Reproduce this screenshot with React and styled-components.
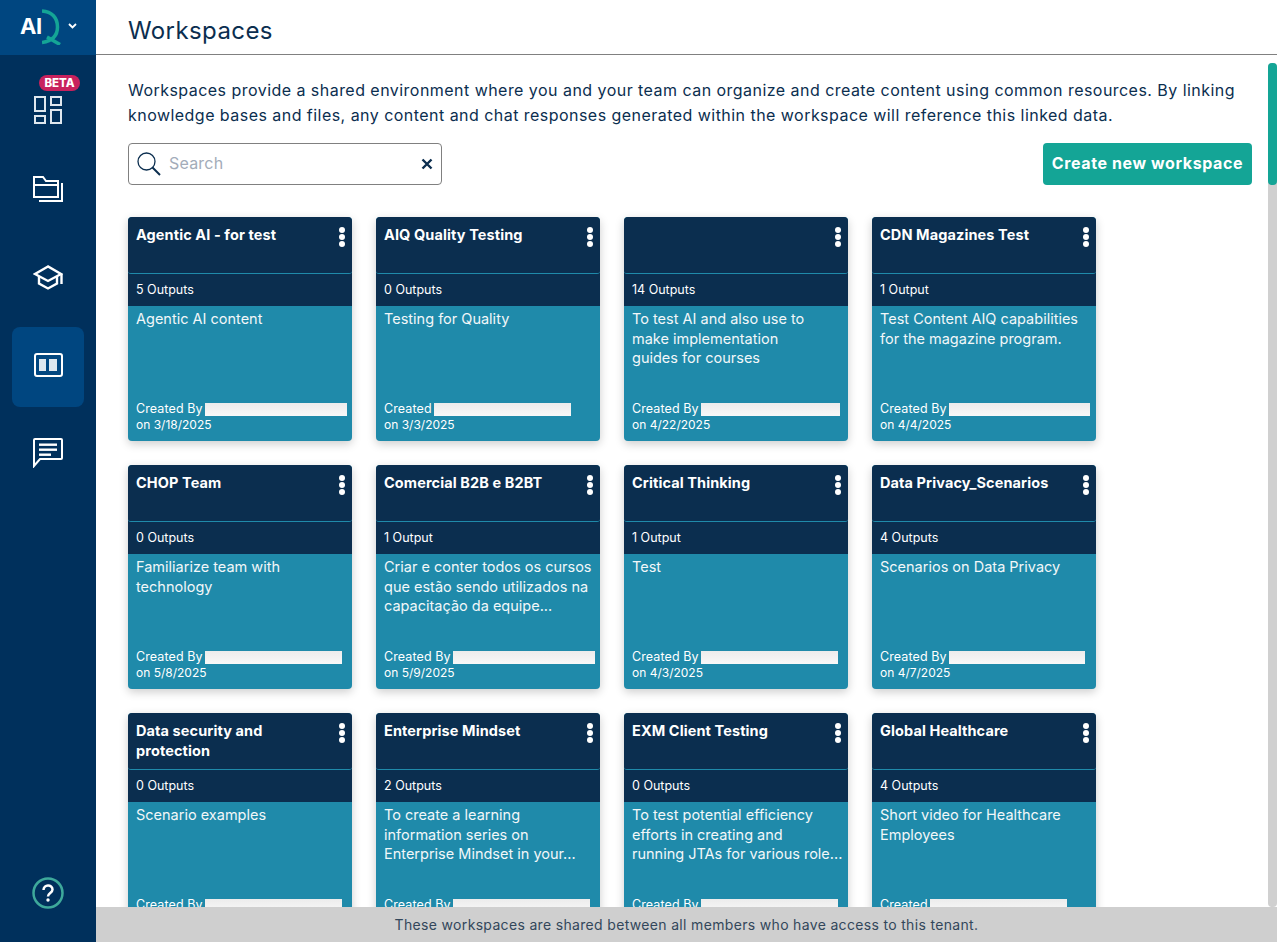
import React from 'react';
import styled, { createGlobalStyle } from 'styled-components';

const GlobalStyle = createGlobalStyle`
  html, body {
    margin: 0;
    height: 100%;
    overflow: hidden;
    background: #fff;
    font-family: Inter, "Noto Sans", sans-serif;
  }
  * { box-sizing: border-box; }
`;

const Page = styled.div`
  display: flex;
  width: 1277px;
  height: 942px;
  overflow: hidden;
`;

const Sidebar = styled.aside`
  width: 96px;
  flex: none;
  background: #00305c;
  display: flex;
  flex-direction: column;
  align-items: center;
`;

const LogoBar = styled.div`
  width: 100%;
  height: 55px;
  background: #004680;
  display: flex;
  align-items: center;
  padding: 0 0 1px 20px;
  color: #fff;
  margin-bottom: 8px;
`;

const LogoText = styled.span`
  font-size: 22px;
  font-weight: 700;
  letter-spacing: -0.5px;
  color: #fff;
  margin-bottom: 2px;
`;

const ChevronWrap = styled.span`
  display: flex;
  margin: 0 0 2px 6px;
`;

const NavItem = styled.div`
  position: relative;
  width: 72px;
  height: 80px;
  margin-bottom: 8px;
  padding-bottom: ${(p) => (p.$beta ? '0' : '4px')};
  padding-top: ${(p) => (p.$beta ? '13px' : '0')};
  border-radius: 8px;
  display: flex;
  align-items: center;
  justify-content: center;
  background: ${(p) => (p.$active ? '#004680' : 'transparent')};
`;

const Beta = styled.span`
  position: absolute;
  top: 12px;
  right: 4px;
  width: 41px;
  height: 16px;
  border-radius: 8px;
  background: #c8215d;
  color: #fff;
  font-size: 11.5px;
  line-height: 16px;
  font-weight: 800;
  text-align: center;
`;

const HelpWrap = styled.div`
  margin-top: auto;
  margin-bottom: 33px;
  display: flex;
`;

const Main = styled.main`
  flex: 1;
  min-width: 0;
  display: flex;
  flex-direction: column;
`;

const Header = styled.header`
  height: 55px;
  flex: none;
  border-bottom: 1px solid #808080;
  padding: 16px 0 0 32px;
`;

const Title = styled.h1`
  margin: 0;
  font-size: 24px;
  line-height: 30px;
  font-weight: 400;
  letter-spacing: 0.4px;
  color: #0b2e4f;
`;

const Body = styled.div`
  flex: 1;
  min-height: 0;
  display: flex;
  overflow: hidden;
`;

const Content = styled.div`
  flex: 1;
  min-width: 0;
  padding: 23px 16px 0 32px;
`;

const Intro = styled.p`
  margin: 0 0 16px;
  font-size: 16px;
  line-height: 24.500px;
  letter-spacing: 0.46px;
  color: #0b2e4f;
  white-space: nowrap;
`;

const Toolbar = styled.div`
  display: flex;
  justify-content: space-between;
  align-items: center;
  margin-bottom: 32px;
`;

const SearchBox = styled.div`
  width: 314px;
  height: 42px;
  border: 1px solid #808080;
  border-radius: 4px;
  display: flex;
  align-items: center;
  padding: 0 8px;
`;

const SearchInput = styled.input`
  flex: 1;
  min-width: 0;
  border: none;
  outline: none;
  margin: 0 0 2px 8px;
  padding: 0;
  font: 400 16px Inter, "Noto Sans", sans-serif;
  letter-spacing: 0.2px;
  color: #0b2e4f;
  &::placeholder { color: #a3acb9; opacity: 1; }
`;

const CreateButton = styled.button`
  width: 209px;
  height: 42px;
  border: none;
  border-radius: 4px;
  background: #14a596;
  color: #fff;
  font: 700 16px Inter, "Noto Sans", sans-serif;
  letter-spacing: 0.6px;
  padding: 0 0 2px;
`;

const Grid = styled.div`
  display: grid;
  grid-template-columns: repeat(4, 224px);
  gap: 24px;
`;

const Card = styled.article`
  height: 224px;
  border-radius: 4px;
  overflow: hidden;
  background: #1f8aaa;
  display: flex;
  flex-direction: column;
  box-shadow: 0 3px 10px rgba(0, 0, 0, 0.2);
`;

const CardTop = styled.div`
  height: 89px;
  flex: none;
  background: #0b2e4f;
  display: flex;
  flex-direction: column;
`;

const CardHead = styled.div`
  height: 57px;
  flex: none;
  padding: 8px 7px 0 8px;
  display: flex;
  justify-content: space-between;
  border-bottom: 1px solid #1f8aaa;
  border-radius: 0 0 3px 3px;
`;

const CardTitle = styled.h2`
  margin: 0;
  font-size: 14.5px;
  line-height: 20px;
  font-weight: 700;
  letter-spacing: 0.1px;
  color: #fff;
`;

const Dots = styled.div`
  flex: none;
  width: 6px;
  margin-top: 2px;
  display: flex;
  flex-direction: column;
  gap: 1px;
  span {
    width: 6px;
    height: 6px;
    border-radius: 50%;
    background: #fff;
  }
`;

const Outputs = styled.div`
  padding: 0 8px 2px;
  flex: 1;
  display: flex;
  align-items: center;
  font-size: 12.5px;
  color: #fff;
`;

const CardBody = styled.div`
  flex: 1;
  min-height: 0;
  padding: 3px 8px 8px;
  display: flex;
  flex-direction: column;
  justify-content: space-between;
  color: #fff;
`;

const Description = styled.p`
  margin: 0;
  font-size: 14.5px;
  line-height: 19.500px;
  color: #f2f7f9;
  white-space: nowrap;
`;

const Meta = styled.div`
  font-size: 12.5px;
  line-height: 16px;
`;

const CreatedRow = styled.div`
  display: flex;
  align-items: center;
  gap: 2px;
  letter-spacing: 0.1px;
  white-space: nowrap;
`;

const Redacted = styled.span`
  flex: none;
  height: 13px;
  width: ${(p) => p.$w}px;
  background: linear-gradient(#ececec, #f8f8f8);
`;

const DateLine = styled.div`
  font-size: 12px;
`;

const Footer = styled.div`
  height: 35px;
  flex: none;
  background: #cfcfcf;
  color: #33475b;
  font-size: 14px;
  letter-spacing: 0.33px;
  display: flex;
  align-items: center;
  justify-content: center;
`;

const ScrollTrack = styled.div`
  width: 9px;
  flex: none;
  margin-top: 8px;
  background: #d0d0d0;
  border-radius: 4px;
`;

const ScrollThumb = styled.div`
  height: 122px;
  background: #14a596;
  border-radius: 4px;
`;

const DashboardIcon = () => (
  <svg width="28" height="28" viewBox="0 0 28 28" fill="none" stroke="#dfe7ee" strokeWidth="2">
    <rect x="1" y="1" width="10" height="14" />
    <rect x="17" y="1" width="10" height="8" />
    <rect x="1" y="20" width="10" height="7" />
    <rect x="17" y="14" width="10" height="13" />
  </svg>
);

const FilesIcon = () => (
  <svg width="30" height="26" viewBox="0 0 30 26" fill="none" stroke="#fff" strokeWidth="2">
    <path d="M1 1h9l3 4h12v16H1z" />
    <path d="M1 9h24" />
    <path d="M29 7v18H6" />
  </svg>
);

const CapIcon = () => (
  <svg width="30" height="25" viewBox="0 0 30 25" fill="none" stroke="#fff" strokeWidth="2.4">
    <path d="M15 1.5L2 9l13 7 13-7z" />
    <path d="M6 11v7.5l9 5 9-5V11" />
    <path d="M28.5 9v10" />
  </svg>
);

const BoardIcon = () => (
  <svg width="29" height="24" viewBox="0 0 29 24">
    <rect x="1" y="1" width="27" height="22" rx="2" fill="none" stroke="#fff" strokeWidth="2" />
    <rect x="5" y="6" width="7" height="12" fill="#dfe7ee" />
    <rect x="15" y="6" width="8" height="12" fill="#dfe7ee" />
  </svg>
);

const ChatIcon = () => (
  <svg width="30" height="30" viewBox="0 0 30 30">
    <path d="M1 2a1 1 0 0 1 1-1h26a1 1 0 0 1 1 1v18a1 1 0 0 1-1 1H7l-6 7z" fill="none" stroke="#fff" strokeWidth="2" />
    <rect x="6" y="5.5" width="18" height="2.4" fill="#fff" />
    <rect x="6" y="10.5" width="18" height="2.4" fill="#fff" />
    <rect x="6" y="15.5" width="12" height="2.4" fill="#fff" />
  </svg>
);

const HelpIcon = () => (
  <svg width="32" height="32" viewBox="0 0 32 32">
    <circle cx="16" cy="16" r="14.5" fill="none" stroke="#3ea99b" strokeWidth="2.5" />
    <path d="M11.5 13c0-6 9-6 9-.5 0 3.5-4.500 3.500-4.500 7" fill="none" stroke="#fff" strokeWidth="2.5" />
    <circle cx="16" cy="23" r="1.7" fill="#fff" />
  </svg>
);

const LogoQ = () => (
  <svg width="20" height="36" viewBox="0 0 20 36" fill="none" stroke="#14a596">
    <path d="M0 2C10 2.500 15.500 9 15.500 18S10 32 0 33.500" strokeWidth="3.5" />
    <path d="M5 28L18 35.500" strokeWidth="3.5" />
  </svg>
);

const Chevron = () => (
  <svg width="9" height="6" viewBox="0 0 9 6" fill="none" stroke="#fff" strokeWidth="1.8">
    <path d="M1 1l3.5 3.5L8 1" />
  </svg>
);

const SearchIcon = () => (
  <svg width="24" height="24" viewBox="0 0 24 24" fill="none" stroke="#0b2e4f">
    <circle cx="9.5" cy="9.5" r="8.5" strokeWidth="1.3" />
    <path d="M15.5 15.5L23 23" strokeWidth="2" />
  </svg>
);

const CloseIcon = () => (
  <svg width="12" height="12" viewBox="0 0 12 12" stroke="#0b2e4f" strokeWidth="2.4">
    <path d="M1.5 1.5l9 9M10.5 1.5l-9 9" />
  </svg>
);

const workspaces = [
  { title: 'Agentic AI - for test', outputs: '5 Outputs', text: ['Agentic AI content'], by: 'Created By', w: 142, date: '3/18/2025' },
  { title: 'AIQ Quality Testing', outputs: '0 Outputs', text: ['Testing for Quality'], by: 'Created', w: 137, date: '3/3/2025' },
  { title: '', outputs: '14 Outputs', text: ['To test AI and also use to', 'make implementation', 'guides for courses'], by: 'Created By', w: 139, date: '4/22/2025' },
  { title: 'CDN Magazines Test', outputs: '1 Output', text: ['Test Content AIQ capabilities', 'for the magazine program.'], by: 'Created By', w: 141, date: '4/4/2025' },
  { title: 'CHOP Team', outputs: '0 Outputs', text: ['Familiarize team with', 'technology'], by: 'Created By', w: 137, date: '5/8/2025' },
  { title: 'Comercial B2B e B2BT', outputs: '1 Output', text: ['Criar e conter todos os cursos', 'que estão sendo utilizados na', 'capacitação da equipe...'], by: 'Created By', w: 142, date: '5/9/2025' },
  { title: 'Critical Thinking', outputs: '1 Output', text: ['Test'], by: 'Created By', w: 137, date: '4/3/2025' },
  { title: 'Data Privacy_Scenarios', outputs: '4 Outputs', text: ['Scenarios on Data Privacy'], by: 'Created By', w: 136, date: '4/7/2025' },
  { title: 'Data security and protection', outputs: '0 Outputs', text: ['Scenario examples'], by: 'Created By', w: 137, date: '' },
  { title: 'Enterprise Mindset', outputs: '2 Outputs', text: ['To create a learning', 'information series on', 'Enterprise Mindset in your...'], by: 'Created By', w: 137, date: '' },
  { title: 'EXM Client Testing', outputs: '0 Outputs', text: ['To test potential efficiency', 'efforts in creating and', 'running JTAs for various role...'], by: 'Created By', w: 137, date: '' },
  { title: 'Global Healthcare', outputs: '4 Outputs', text: ['Short video for Healthcare', 'Employees'], by: 'Created', w: 137, date: '' },
];

const WorkspaceCard = ({ item }) => (
  <Card>
    <CardTop>
      <CardHead>
        <CardTitle>{item.title}</CardTitle>
        <Dots>
          <span />
          <span />
          <span />
        </Dots>
      </CardHead>
      <Outputs>{item.outputs}</Outputs>
    </CardTop>
    <CardBody>
      <Description>
        {item.text.map((line) => (
          <React.Fragment key={line}>
            {line}
            <br />
          </React.Fragment>
        ))}
      </Description>
      <Meta>
        <CreatedRow>
          {item.by}
          <Redacted $w={item.w} />
        </CreatedRow>
        <DateLine>on {item.date}</DateLine>
      </Meta>
    </CardBody>
  </Card>
);

const App = () => {
  return (
    <Page>
      <GlobalStyle />
      <Sidebar>
        <LogoBar>
          <LogoText>AI</LogoText>
          <LogoQ />
          <ChevronWrap><Chevron /></ChevronWrap>
        </LogoBar>
        <NavItem $beta>
          <Beta>BETA</Beta>
          <DashboardIcon />
        </NavItem>
        <NavItem><FilesIcon /></NavItem>
        <NavItem><CapIcon /></NavItem>
        <NavItem $active><BoardIcon /></NavItem>
        <NavItem><ChatIcon /></NavItem>
        <HelpWrap><HelpIcon /></HelpWrap>
      </Sidebar>
      <Main>
        <Header>
          <Title>Workspaces</Title>
        </Header>
        <Body>
          <Content>
            <Intro>
              Workspaces provide a shared environment where you and your team can organize and create content using common resources. By linking
              <br />
              knowledge bases and files, any content and chat responses generated within the workspace will reference this linked data.
            </Intro>
            <Toolbar>
              <SearchBox>
                <SearchIcon />
                <SearchInput placeholder="Search" />
                <CloseIcon />
              </SearchBox>
              <CreateButton>Create new workspace</CreateButton>
            </Toolbar>
            <Grid>
              {workspaces.map((item) => (
                <WorkspaceCard key={item.title + item.outputs} item={item} />
              ))}
            </Grid>
          </Content>
          <ScrollTrack>
            <ScrollThumb />
          </ScrollTrack>
        </Body>
        <Footer>These workspaces are shared between all members who have access to this tenant.</Footer>
      </Main>
    </Page>
  );
};

export default App;
